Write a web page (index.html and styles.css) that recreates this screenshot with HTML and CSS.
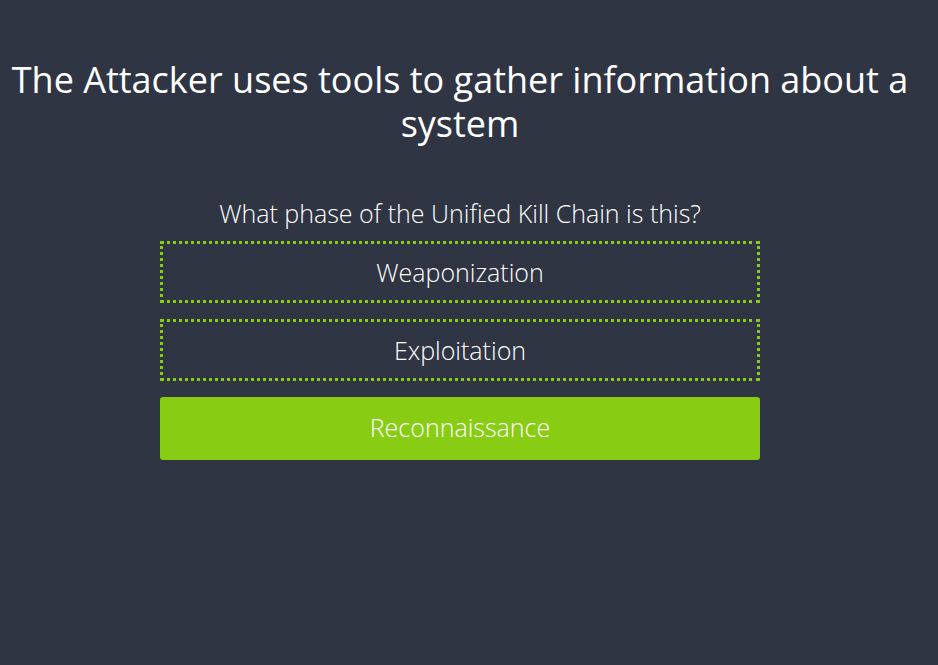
FILE: index.html
```html
<!DOCTYPE html>
<html lang="en">
<head>
  <meta charset="UTF-8">
  <meta name="viewport" content="width=device-width, initial-scale=1.0">
  <title>Unified Kill Chain Quiz</title>
  <link rel="stylesheet" href="styles.css">
</head>
<body>

  <div class="quiz">
    <h1 class="scenario">The Attacker uses tools to gather information about a system</h1>

    <p class="question">What phase of the Unified Kill Chain is this?</p>

    <div class="answers">
      <button class="answer">Weaponization</button>
      <button class="answer">Exploitation</button>
      <button class="answer correct">Reconnaissance</button>
    </div>
  </div>

</body>
</html>
```

FILE: styles.css
```css
body {
  margin: 0;
  background-color: #303544;
  color: #ffffff;
  font-family: "Open Sans", "Noto Sans", sans-serif;
  height: 665px;
}

.quiz {
  width: 920px;
  padding-top: 58px;
  text-align: center;
}

.scenario {
  margin: 0 0 56px;
  font-size: 36px;
  font-weight: 400;
  line-height: 44px;
}

.question {
  margin: 0 0 17px;
  font-size: 25px;
  font-weight: 300;
  line-height: 22px;
}

.answers {
  width: 600px;
  margin: 0 auto;
  display: flex;
  flex-direction: column;
  gap: 16px;
}

.answer {
  height: 62px;
  padding-bottom: 2px;
  background: transparent;
  border: 3px dotted #88cc14;
  border-radius: 0;
  color: #ffffff;
  font-family: inherit;
  font-size: 25px;
  font-weight: 300;
  cursor: pointer;
}

.answer.correct {
  height: 63px;
  padding-bottom: 4px;
  background-color: #88cc14;
  border: none;
  border-radius: 3px;
}
```
